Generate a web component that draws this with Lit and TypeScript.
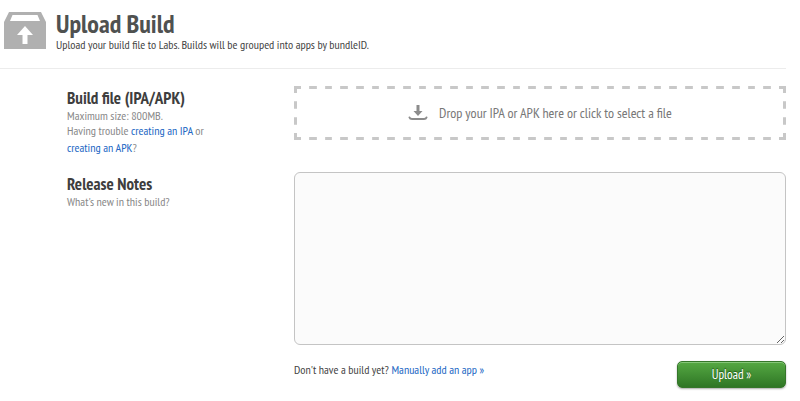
import { LitElement, html, css } from "lit";
import { customElement, state } from "lit/decorators.js";

@customElement("app-root")
export class AppRoot extends LitElement {
  @state() private fileName = "";

  static styles = css`
    :host {
      display: block;
      box-sizing: border-box;
      padding: 8px 14px 12px 0;
      background: #fff;
      color: #444;
      font: 12px/16px "PT Sans Narrow", "Liberation Sans Narrow", "Roboto Condensed", "Liberation Sans", sans-serif;
    }
    * { box-sizing: border-box; }
    h1, h2, p { margin: 0; }
    a { color: #2268c4; text-decoration: none; }
    a:hover { text-decoration: underline; }
    header {
      display: flex;
      gap: 10px;
      height: 61px;
      padding-left: 4px;
      border-bottom: 1px solid #ececec;
    }
    .box { flex: none; width: 42px; height: 37px; margin-top: 4px; }
    h1 { font-size: 26px; line-height: 32px; color: #4f5150; }
    .intro { line-height: 10px; }
    form {
      display: grid;
      grid-template-columns: 160px minmax(0, 1fr);
      column-gap: 67px;
      row-gap: 16px;
      padding: 17px 0 0 67px;
    }
    .about { color: #888; }
    h2 { font-size: 17px; line-height: 24px; color: #3e3e3e; }
    .about p { line-height: 17px; }
    .about h2 + p { line-height: 12px; }
    .file { position: absolute; width: 1px; height: 1px; opacity: 0; }
    .drop {
      display: flex;
      align-items: center;
      justify-content: center;
      gap: 11px;
      height: 54px;
      color: #777;
      font-size: 14px;
      cursor: pointer;
      border: 3px solid transparent;
      border-image: url("data:image/svg+xml,%3Csvg xmlns='http://www.w3.org/2000/svg' width='75' height='75' fill='%23c8c8c8'%3E%3Cpath d='M0 0h14v6H6v8H0zM61 0h14v14h-6V6h-8zM0 61h6v8h8v6H0zM69 61h6v14H61v-6h8zM30 0h15v6H30zM30 69h15v6H30zM0 30h6v15H0zM69 30h6v15h-6z'/%3E%3C/svg%3E") 22 / 11px round;
    }
    .file:focus-visible + .drop { background: #f4f8fd; }
    .down { width: 20px; height: 17px; }
    .notes {
      display: block;
      width: 100%;
      height: 173px;
      padding: 8px;
      border: 1px solid #c4c4c4;
      border-radius: 6px;
      background: #fbfbfb;
      color: #444;
      font: inherit;
      outline-color: #8ab4e8;
      resize: vertical;
    }
    .actions {
      grid-column: 2;
      display: flex;
      justify-content: space-between;
      align-items: flex-start;
    }
    .actions p { line-height: 17px; }
    button {
      width: 109px;
      height: 27px;
      padding: 0;
      border: 1px solid #35762a;
      border-radius: 5px;
      background: linear-gradient(#55a943, #2f7625);
      box-shadow: inset 0 1px 0 #86c779, 0 1px 2px #0005;
      color: #fff;
      font: 13px/24px "PT Sans Narrow", "Liberation Sans Narrow", "Roboto Condensed", "Liberation Sans", sans-serif;
      text-shadow: 0 -1px 1px #1d5517;
      cursor: pointer;
    }
  `;

  private pick(e: Event) {
    this.fileName = (e.target as HTMLInputElement).files?.[0]?.name ?? "";
  }

  render() {
    return html`
      <header>
        <svg class="box" viewBox="0 0 42 37" aria-hidden="true">
          <path fill="#b0b0b0" fill-rule="evenodd" d="M5 0H37L42 10V37H0V10ZM8.500 3L6 9H36L33.500 3ZM21 14L13 23H18.500V32H23.500V23H29Z" />
        </svg>
        <div>
          <h1>Upload Build</h1>
          <p class="intro">Upload your build file to Labs. Builds will be grouped into apps by bundleID.</p>
        </div>
      </header>
      <form @submit=${(e: Event) => e.preventDefault()}>
        <div class="about">
          <h2>Build file (IPA/APK)</h2>
          <p>Maximum size: 800MB.</p>
          <p>Having trouble <a href="#ipa">creating an IPA</a> or <a href="#apk">creating an APK</a>?</p>
        </div>
        <div>
          <input class="file" id="file" type="file" accept=".ipa,.apk" @change=${this.pick} />
          <label class="drop" for="file">
            <svg class="down" viewBox="0 0 20 17" aria-hidden="true">
              <path fill="#8c8c8c" d="M8.500 0h3v6H14.500l-4.500 5L5.500 6h3z" />
              <path fill="none" stroke="#8c8c8c" stroke-width="2" stroke-linecap="round" d="M1.500 12.500Q2 14 4 14H16Q18 14 18.500 12.500" />
            </svg>
            <span>${this.fileName || "Drop your IPA or APK here or click to select a file"}</span>
          </label>
        </div>
        <div class="about">
          <h2><label for="notes">Release Notes</label></h2>
          <p>What's new in this build?</p>
        </div>
        <textarea class="notes" id="notes"></textarea>
        <div class="actions">
          <p>Don't have a build yet? <a href="#manual">Manually add an app »</a></p>
          <button type="submit">Upload »</button>
        </div>
      </form>
    `;
  }
}
